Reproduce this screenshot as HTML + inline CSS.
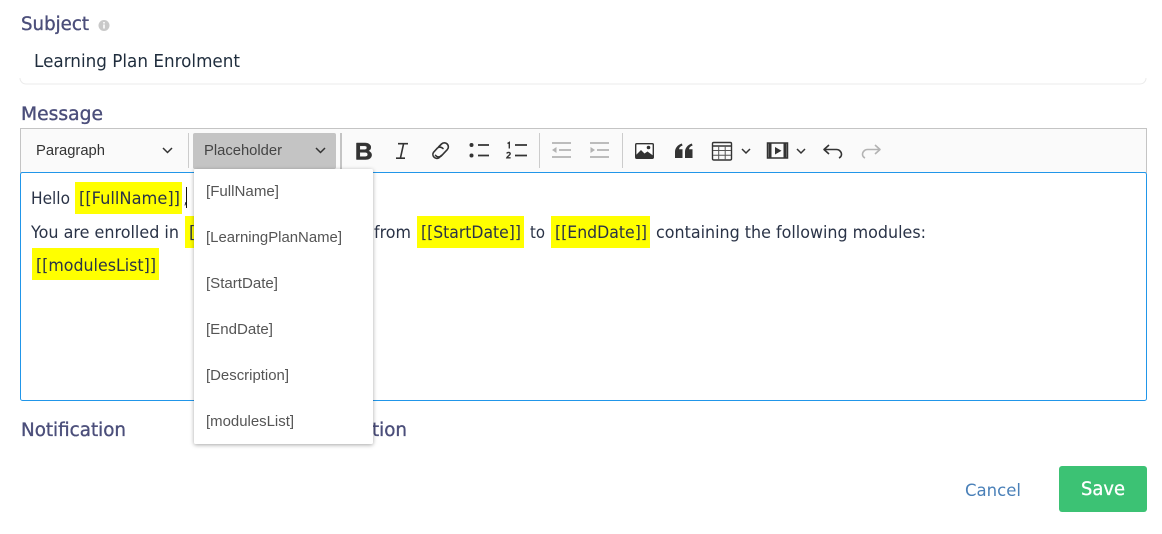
<!DOCTYPE html>
<html><head><meta charset="utf-8"><style>
html,body{margin:0;padding:0;background:#fff;width:1162px;height:534px;overflow:hidden}
svg{display:block}
.p{font-family:"DejaVu Sans",sans-serif}
.l{font-family:"DejaVu Sans",sans-serif;font-size:18.500px;fill:#4b4e7a;stroke:#4b4e7a;stroke-width:.35px}
.a{font-family:"Liberation Sans",sans-serif;font-size:15px}
</style></head><body>
<svg width="1162" height="534" viewBox="0 0 1162 534" xmlns="http://www.w3.org/2000/svg">
<defs><filter id="s" x="-10%" y="-10%" width="120%" height="120%"><feDropShadow dx="0" dy="1" stdDeviation="2" flood-color="#000" flood-opacity=".35"/></filter></defs>
<rect width="1162" height="534" fill="#fff"/>

<!-- labels -->
<text class="l" x="21" y="30" textLength="68" lengthAdjust="spacingAndGlyphs">Subject</text>
<circle cx="104" cy="25.500" r="5.500" fill="#c9c9c9"/><rect x="103.200" y="24.500" width="1.600" height="4" fill="#fff"/><rect x="103.200" y="22" width="1.600" height="1.500" fill="#fff"/>
<text class="p" x="34" y="67" font-size="17.500" fill="#1f2d3d" textLength="206" lengthAdjust="spacingAndGlyphs">Learning Plan Enrolment</text>
<path d="M20 78a6 6 0 0 0 6 6H1140a6 6 0 0 0 6-6" fill="none" stroke="#ebebeb" stroke-width="1"/>
<text class="l" x="21" y="120" textLength="82" lengthAdjust="spacingAndGlyphs">Message</text>

<!-- toolbar -->
<rect x="20.500" y="128.500" width="1126" height="44" fill="#fafafa" stroke="#c4c4c4"/>
<text class="a" x="36" y="155" fill="#333" textLength="69" lengthAdjust="spacingAndGlyphs">Paragraph</text>
<path d="M163 148l4.500 4.500 4.500-4.500" fill="none" stroke="#333" stroke-width="1.500"/>
<rect x="188" y="133" width="1" height="35" fill="#ccc"/>
<rect x="193" y="133" width="143" height="36" rx="2" fill="#c4c4c4"/>
<text class="a" x="204" y="155" fill="#444" textLength="78" lengthAdjust="spacingAndGlyphs">Placeholder</text>
<path d="M316 148l4.500 4.500 4.500-4.500" fill="none" stroke="#333" stroke-width="1.500"/>
<rect x="340" y="133" width="2" height="36" fill="#c4c4c4"/>

<!-- bold -->
<path fill-rule="evenodd" d="M356.500 143H365c3.600 0 5.800 1.800 5.800 4.300 0 1.800-1 3.100-2.600 3.700 2.100.5 3.400 2 3.400 4 0 2.900-2.400 4.500-6 4.500h-9.100zM359.800 145.800v3.900h4.600c1.500 0 2.500-.7 2.500-2s-1-1.900-2.500-1.900zM359.800 152.300v4.400h5.200c1.700 0 2.800-.8 2.800-2.200s-1.100-2.200-2.800-2.200z" fill="#333" stroke="#333" stroke-width=".5"/>
<!-- italic -->
<path d="M398 143.700h10M396 158.200h9M403.600 143.700l-3.200 14.500" fill="none" stroke="#333" stroke-width="1.600"/>
<!-- link -->
<g fill="none" stroke="#333" stroke-width="1.600" stroke-linecap="round"><path d="M438.500 147l3-3a4 4 0 0 1 5.700 5.700l-6 6.300a4 4 0 0 1-5.700-.6"/><path d="M443 148.500a4 4 0 0 0-5.500-.5l-4 4.300a4 4 0 0 0 5.500 5.500l2.500-2.500"/></g>
<!-- bullets -->
<circle cx="471.500" cy="145" r="2" fill="#333"/><circle cx="471.500" cy="155.500" r="2" fill="#333"/>
<path d="M478 145h11M478 155.500h11" stroke="#333" stroke-width="1.800"/>
<!-- numbered -->
<path d="M507.500 143.500l1.800-1v6M506.800 153.500c.5-1.500 3.400-1.500 3.400.3 0 1.200-2.900 2.500-3.400 4h3.800" fill="none" stroke="#333" stroke-width="1.400"/>
<path d="M515 145h12M515 155.500h12" stroke="#333" stroke-width="1.800"/>
<rect x="539" y="133" width="1" height="35" fill="#ccc"/>
<!-- outdent / indent -->
<g stroke="#b3b3b3" stroke-width="1.800"><path d="M552 143h19M559 150h12M552 157h19"/></g><path d="M552 150l4.500-3v6z" fill="#b3b3b3"/>
<g stroke="#b3b3b3" stroke-width="1.800"><path d="M590 143h19M597 150h12M590 157h19"/></g><path d="M595 150l-4.500-3v6z" fill="#b3b3b3"/>
<rect x="622" y="133" width="1" height="35" fill="#ccc"/>
<!-- image -->
<rect x="635.700" y="143.700" width="17.600" height="14.600" rx="1" fill="#fff" stroke="#333" stroke-width="1.400"/>
<path d="M636 158v-3l5-5 3.500 3.500 3-2 5.500 4v2.500z" fill="#333"/><circle cx="648.500" cy="147.500" r="1.800" fill="#333"/>
<!-- quote -->
<path d="M675 158v-6c0-4 2.500-7 6.800-8.500l.8 2c-2.500 1-3.400 2.200-3.500 3.800h3.400v8.700zM685 158v-6c0-4 2.500-7 6.800-8.500l.8 2c-2.500 1-3.400 2.200-3.500 3.800h3.400v8.700z" fill="#333"/>
<!-- table -->
<rect x="712.500" y="142.500" width="19" height="17.500" rx="1.200" fill="none" stroke="#333" stroke-width="1.400"/>
<path d="M712.500 146h19" stroke="#333" stroke-width="1.400"/>
<path d="M718.700 146v14M725.200 146v14M713 150.500h18M713 155.200h18" stroke="#555" stroke-width="1"/>
<path d="M742 149l4 4 4-4" fill="none" stroke="#333" stroke-width="1.500"/>
<!-- media -->
<rect x="767.500" y="143" width="20" height="15" fill="none" stroke="#333" stroke-width="1.500"/>
<path d="M770 143v15M785 143v15" stroke="#333" stroke-width="3"/>
<path d="M775 147v7.500l6.500-3.700z" fill="#333"/>
<path d="M797 149l4 4 4-4" fill="none" stroke="#333" stroke-width="1.500"/>
<!-- undo redo -->
<path d="M829 145l-5 4.500 5 4.500M824.500 149.500h12a5 5 0 0 1 5 4.800c0 2-1 3-2.500 3.700" fill="none" stroke="#333" stroke-width="1.600" stroke-linejoin="round"/>
<path d="M875 145l5 4.500-5 4.500M879.500 149.500h-12a5 5 0 0 0-5 4.800c0 2 1 3 2.500 3.700" fill="none" stroke="#b3b3b3" stroke-width="1.600" stroke-linejoin="round"/>

<!-- editor -->
<rect x="20.500" y="172.500" width="1126" height="228" rx="2" fill="#fff" stroke="#2196e9"/>
<rect x="75" y="182" width="107" height="32" fill="#ff0"/>
<rect x="185" y="216" width="30" height="32" fill="#ff0"/>
<rect x="417" y="216" width="107" height="32" fill="#ff0"/>
<rect x="551" y="216" width="99" height="32" fill="#ff0"/>
<rect x="32" y="248" width="127" height="32" fill="#ff0"/>
<g class="p" font-size="16.500" fill="#2a3347">
<text x="31" y="204" textLength="39" lengthAdjust="spacingAndGlyphs">Hello</text>
<text x="79" y="204" textLength="101" lengthAdjust="spacingAndGlyphs">[[FullName]]</text>
<text x="183.500" y="204" font-size="13">,</text>
<text x="31" y="238" textLength="148" lengthAdjust="spacingAndGlyphs">You are enrolled in</text>
<text x="189" y="238">[[</text>
<text x="374" y="238" textLength="37" lengthAdjust="spacingAndGlyphs">from</text>
<text x="421" y="238" textLength="100" lengthAdjust="spacingAndGlyphs">[[StartDate]]</text>
<text x="530" y="238" textLength="15" lengthAdjust="spacingAndGlyphs">to</text>
<text x="555" y="238" textLength="92" lengthAdjust="spacingAndGlyphs">[[EndDate]]</text>
<text x="656" y="238" textLength="270" lengthAdjust="spacingAndGlyphs">containing the following modules:</text>
<text x="36" y="271" textLength="120" lengthAdjust="spacingAndGlyphs">[[modulesList]]</text>
</g>
<rect x="186" y="187" width="1" height="21" fill="#111"/>

<!-- notification labels -->
<text class="l" x="21" y="436" textLength="105" lengthAdjust="spacingAndGlyphs">Notification</text>
<text class="l" x="302" y="436" textLength="105" lengthAdjust="spacingAndGlyphs">Notification</text>

<!-- dropdown -->
<rect x="194" y="169" width="179" height="275" rx="2" fill="#fff" filter="url(#s)"/>
<g class="a" fill="#555">
<text x="206" y="196" textLength="73" lengthAdjust="spacingAndGlyphs">[FullName]</text>
<text x="206" y="242" textLength="136" lengthAdjust="spacingAndGlyphs">[LearningPlanName]</text>
<text x="206" y="288" textLength="72" lengthAdjust="spacingAndGlyphs">[StartDate]</text>
<text x="206" y="334" textLength="67" lengthAdjust="spacingAndGlyphs">[EndDate]</text>
<text x="206" y="380" textLength="83" lengthAdjust="spacingAndGlyphs">[Description]</text>
<text x="206" y="426" textLength="88" lengthAdjust="spacingAndGlyphs">[modulesList]</text>
</g>

<!-- actions -->
<text class="p" x="965" y="496" font-size="16.500" fill="#4a80b8" textLength="56" lengthAdjust="spacingAndGlyphs">Cancel</text>
<rect x="1059" y="466" width="88" height="46" rx="3" fill="#3cc274"/>
<text class="p" x="1081" y="495" font-size="18.500" fill="#fff" stroke="#fff" stroke-width=".3" textLength="44" lengthAdjust="spacingAndGlyphs">Save</text>
</svg>
</body></html>
